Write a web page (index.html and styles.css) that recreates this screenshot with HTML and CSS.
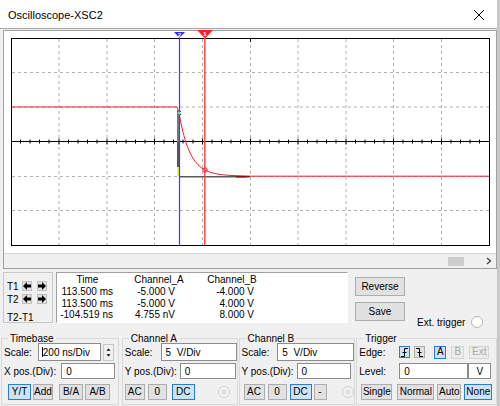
FILE: index.html
```html
<!DOCTYPE html>
<html>
<head>
<meta charset="utf-8">
<link rel="stylesheet" href="styles.css">
</head>
<body>
<div class="window">
  <div class="titlebar">
    <span class="title">Oscilloscope-XSC2</span>
    <svg class="close" width="12" height="12" viewBox="0 0 12 12"><path d="M1 1 L11 11 M11 1 L1 11" stroke="#000" stroke-width="1"/></svg>
  </div>
  <div class="scope">
    <svg class="graph" width="492" height="222" viewBox="4 31 492 222">
      <rect x="11.5" y="38.5" width="478" height="207" fill="#fff" stroke="#000" stroke-width="1"/>
      <g stroke="#b0b0b0" stroke-width="1" stroke-dasharray="3 3">
        <line x1="59" y1="39" x2="59" y2="245"/>
        <line x1="107" y1="39" x2="107" y2="245"/>
        <line x1="154.5" y1="39" x2="154.5" y2="245"/>
        <line x1="202.5" y1="39" x2="202.5" y2="245"/>
        <line x1="250.5" y1="39" x2="250.5" y2="245"/>
        <line x1="298" y1="39" x2="298" y2="245"/>
        <line x1="346" y1="39" x2="346" y2="245"/>
        <line x1="393.5" y1="39" x2="393.5" y2="245"/>
        <line x1="441.5" y1="39" x2="441.5" y2="245"/>
        <line x1="12" y1="72.5" x2="489" y2="72.5"/>
        <line x1="12" y1="107" x2="489" y2="107"/>
        <line x1="12" y1="176.5" x2="489" y2="176.5"/>
        <line x1="12" y1="210.5" x2="489" y2="210.5"/>
      </g>
      <line x1="12" y1="141.5" x2="489" y2="141.5" stroke="#000" stroke-width="1.2"/>
      <path stroke="#000" stroke-width="1" d="M20.5 139.5v4M30 139.5v4M39.5 139.5v4M49 139.5v4M68.5 139.5v4M78 139.5v4M87.5 139.5v4M97 139.5v4M59 138.5v6M116.5 139.5v4M126 139.5v4M135.5 139.5v4M145 139.5v4M107 138.5v6M164 139.5v4M173.5 139.5v4M183 139.5v4M193 139.5v4M154.5 138.5v6M212 139.5v4M221.5 139.5v4M231 139.5v4M240.5 139.5v4M202.5 138.5v6M260 139.5v4M269.5 139.5v4M279 139.5v4M288.5 139.5v4M250.5 138.5v6M307.5 139.5v4M317 139.5v4M326.5 139.5v4M336 139.5v4M298 138.5v6M355.5 139.5v4M365 139.5v4M374.5 139.5v4M384 139.5v4M346 138.5v6M403 139.5v4M412.5 139.5v4M422 139.5v4M431.5 139.5v4M393.5 138.5v6M451 139.5v4M460.5 139.5v4M470 139.5v4M479.5 139.5v4M441.5 138.5v6M250.5 39v3"/>
      <!-- channel B trace -->
      <path fill="none" stroke="#e8262b" stroke-width="1" d="M12 107 H177 L179 113 L181 123.5 L183 132.2 L185 139.5 L187 145.6 L189 150.6 L192 156.7 L195 161.3 L198 164.8 L202 168.3 L206 170.6 L210 172.2 L215 173.6 L220 174.5 L230 175.4 L240 175.8 L250 176.2 H489"/>
      <!-- channel A trace -->
      <line x1="178" y1="110" x2="178" y2="142" stroke="#7a7a7a" stroke-width="2"/>
      <line x1="178" y1="142" x2="178" y2="167" stroke="#202020" stroke-width="1.5"/>
      <line x1="178" y1="167" x2="178" y2="176" stroke="#f2f200" stroke-width="1.5"/>
      <line x1="179" y1="176.7" x2="246" y2="176.7" stroke="#5a5a5a" stroke-width="1.5"/>
      <line x1="236" y1="176.7" x2="250" y2="176.7" stroke="#8a1010" stroke-width="1.5"/>
      <!-- cursors -->
      <line x1="179.5" y1="38" x2="179.5" y2="245" stroke="#3b3bff" stroke-width="1.2"/>
      <line x1="204.8" y1="38" x2="204.8" y2="245" stroke="#ff3b3b" stroke-width="1.4"/>
      <polygon points="174,32 185,32 179.5,38" fill="#2f2fff"/>
      <text x="179.5" y="36.6" class="cur-num">2</text>
      <polygon points="197,30 213,30 205,38.5" fill="#ff1f1f"/>
      <text x="205" y="36" class="cur-num">1</text>
      <!-- markers -->
      <path d="M177 111 l4 4 M181 111 l-4 4" stroke="#2f2fff" stroke-width="1" fill="none"/>
      <circle cx="179" cy="113" r="1.5" fill="#7fd37f"/>
      <circle cx="205" cy="170" r="2.2" fill="none" stroke="#e8262b" stroke-width="1"/>
    </svg>
    <div class="hscroll">
      <div class="thumb"></div>
      <svg class="sarrow" width="6" height="8" viewBox="0 0 6 8"><path d="M1 1 L4.5 4 L1 7" fill="none" stroke="#444" stroke-width="1.3"/></svg>
    </div>
  </div>

  <div class="readout">
    <div class="tpanel">
      <div class="trow"><span class="tlabel">T1</span>
        <span class="abtn"><svg width="8" height="8" viewBox="0 0 8 8"><path d="M0 4 L4 0 V2.5 H8 V5.5 H4 V8 Z" fill="#000"/></svg></span>
        <span class="abtn"><svg width="8" height="8" viewBox="0 0 8 8"><path d="M8 4 L4 0 V2.5 H0 V5.5 H4 V8 Z" fill="#000"/></svg></span>
      </div>
      <div class="trow"><span class="tlabel">T2</span>
        <span class="abtn"><svg width="8" height="8" viewBox="0 0 8 8"><path d="M0 4 L4 0 V2.5 H8 V5.5 H4 V8 Z" fill="#000"/></svg></span>
        <span class="abtn"><svg width="8" height="8" viewBox="0 0 8 8"><path d="M8 4 L4 0 V2.5 H0 V5.5 H4 V8 Z" fill="#000"/></svg></span>
      </div>
      <div class="tdiff">T2-T1</div>
    </div>
    <div class="table">
      <div class="thead c1">Time</div><div class="thead c2">Channel_A</div><div class="thead c3">Channel_B</div>
      <div class="tcell c1">113.500 ms</div><div class="tcell c2">-5.000 V</div><div class="tcell c3">-4.000 V</div>
      <div class="tcell c1">113.500 ms</div><div class="tcell c2">-5.000 V</div><div class="tcell c3">4.000 V</div>
      <div class="tcell c1">-104.519 ns</div><div class="tcell c2">4.755 nV</div><div class="tcell c3">8.000 V</div>
    </div>
    <div class="actions">
      <button class="btn big">Reverse</button>
      <button class="btn big">Save</button>
    </div>
    <div class="ext">
      <span>Ext. trigger</span><span class="radio"></span>
    </div>
  </div>

  <div class="controls">
    <fieldset class="group g-time">
      <legend>Timebase</legend>
      <div class="row r1">
        <span class="lbl">Scale:</span>
        <span class="input w-tscale"><span class="caret"></span>200 ns/Div</span>
        <span class="spin">
          <svg width="11" height="17" viewBox="0 0 11 17"><path d="M3 6.5 L5.5 3.5 L8 6.5 Z M3 10.5 L5.5 13.5 L8 10.5 Z" fill="#000"/></svg>
        </span>
      </div>
      <div class="row r2">
        <span class="lbl">X pos.(Div):</span>
        <span class="input w-xpos">0</span>
      </div>
      <div class="row r3">
        <button class="btn on b-yt">Y/T</button>
        <button class="btn b-add">Add</button>
        <button class="btn b-ba">B/A</button>
        <button class="btn b-ab">A/B</button>
      </div>
    </fieldset>
    <fieldset class="group g-cha">
      <legend>Channel A</legend>
      <div class="row r1">
        <span class="lbl">Scale:</span>
        <span class="input w-ascale">5&nbsp; V/Div</span>
      </div>
      <div class="row r2">
        <span class="lbl">Y pos.(Div):</span>
        <span class="input w-ypos">0</span>
      </div>
      <div class="row r3">
        <button class="btn b-ac">AC</button>
        <button class="btn b-zero">0</button>
        <button class="btn on b-dc">DC</button>
        <span class="radio dim ra"></span>
      </div>
    </fieldset>
    <fieldset class="group g-chb">
      <legend>Channel B</legend>
      <div class="row r1">
        <span class="lbl">Scale:</span>
        <span class="input w-bscale">5&nbsp; V/Div</span>
      </div>
      <div class="row r2">
        <span class="lbl">Y pos.(Div):</span>
        <span class="input w-yposb">0</span>
      </div>
      <div class="row r3 r3b">
        <button class="btn b-acb">AC</button>
        <button class="btn b-zero">0</button>
        <button class="btn on b-dc">DC</button>
        <button class="btn b-minus">-</button>
        <span class="radio dim rb"></span>
      </div>
    </fieldset>
    <fieldset class="group g-trig">
      <legend>Trigger</legend>
      <div class="row r1">
        <span class="lbl lbl-t">Edge:</span>
        <button class="btn on edge e1"><svg width="9" height="9" viewBox="0 0 9 9"><path d="M1 8.5 H4.5 V0.5 H8 M2.5 4.5 H6.5" fill="none" stroke="#000" stroke-width="1"/></svg></button>
        <button class="btn edge e2"><svg width="9" height="9" viewBox="0 0 9 9"><path d="M1 0.5 H4.5 V8.5 H8 M2.5 4.5 H6.5" fill="none" stroke="#000" stroke-width="1"/></svg></button>
        <button class="btn on src sA">A</button>
        <button class="btn off src sB">B</button>
        <button class="btn off src sExt">Ext</button>
      </div>
      <div class="row r2">
        <span class="lbl lbl-t">Level:</span>
        <span class="input w-level">0</span>
        <span class="input w-unit">V</span>
      </div>
      <div class="row r3">
        <button class="btn b-single">Single</button>
        <button class="btn b-normal">Normal</button>
        <button class="btn b-auto">Auto</button>
        <button class="btn on b-none">None</button>
      </div>
    </fieldset>
  </div>
</div>
</body>
</html>
```
FILE: styles.css
```css
* { box-sizing: border-box; }
body {
  margin: 0;
  background: #f0f0f0;
  font-family: "Liberation Sans", Arial, sans-serif;
  font-size: 10px;
  color: #000;
}
.window {
  width: 500px;
  height: 406px;
  background: #f0f0f0;
  border-right: 3px solid #c8c8c8;
  overflow: hidden;
}
.titlebar {
  height: 29px;
  background: #fff;
  border-bottom: 1px solid #a8a8a8;
  display: flex;
  align-items: center;
  padding: 0 12px 0 8px;
}
.title { font-size: 11px; flex: 1; padding-top: 1px; }
.close { display: block; margin-top: 1px; }

.scope {
  margin: 1px 0 0 3px;
  width: 494px;
  height: 239px;
  border: 1px solid #a0a0a0;
  background: #fff;
}
.graph { display: block; overflow: visible; }
.cur-num { font-size: 6px; fill: #fff; text-anchor: middle; font-weight: bold; }
.hscroll {
  height: 15px;
  background: #f0f0f0;
  border-top: 1px solid #d8d8d8;
  display: flex;
  align-items: center;
  padding-right: 4px;
}
.thumb { width: 16px; height: 9px; background: #cdcdcd; margin-left: 444px; }
.sarrow { margin-left: auto; display: block; }

.readout {
  display: flex;
  margin-top: 3px;
  height: 52px;
}
.tpanel {
  margin-left: 3px;
  width: 50px;
  height: 51px;
  border: 1px solid #c8c8c8;
  padding: 7px 0 0 3px;
}
.trow { display: flex; align-items: center; height: 12px; margin-bottom: 1px; }
.tlabel { width: 18px; }
.abtn {
  width: 10px; height: 10px;
  background: #e1e1e1;
  border: 1px solid #c0c0c0;
  display: flex; align-items: center; justify-content: center;
  margin-right: 5px;
}
.abtn svg { display: block; }
.tdiff { margin-top: 7px; }

.table {
  margin-left: 3px;
  width: 292px;
  height: 51px;
  background: #fff;
  border: 1px solid #a0a0a0;
  border-right-color: #fff;
  border-bottom-color: #fff;
  display: grid;
  grid-template-columns: 57px 88px 56px;
  grid-template-rows: 12px 12.5px 11px 12px;
  align-items: center;
  padding: 0 0 0 2px;
  line-height: 11px;
}
.thead { text-align: center; }
.tcell { text-align: right; }
.tcell.c1 { padding-right: 3px; }
.tcell.c2 { padding-right: 29px; }
.tcell.c3 { padding-right: 6px; }
.thead.c2 { padding-right: 2px; }

.btn {
  font-family: inherit;
  font-size: 10px;
  color: #000;
  background: #e1e1e1;
  border: 1px solid #adadad;
  padding: 0;
  margin: 0;
  height: 16px;
  line-height: 14px;
  display: flex;
  align-items: center;
  justify-content: center;
}
.btn.on { background: #cce4f7; border-color: #2a7bd3; }
.btn.off { background: #ececec; border-color: #d6d6d6; color: #a8a8a8; }
.btn.big { width: 50px; height: 19px; font-size: 10px; }

.actions {
  margin-left: 7px;
  padding-top: 5px;
  display: flex;
  flex-direction: column;
  gap: 6px;
}
.ext {
  margin-left: 12px;
  display: flex;
  align-items: center;
  align-self: flex-end;
  padding-bottom: 0px;
  margin-bottom: -4px;
}
.ext span:first-child { margin-right: 6px; }
.radio {
  display: inline-block;
  width: 12px; height: 12px;
  border-radius: 50%;
  background: #fff;
  border: 1px solid #b8b8b8;
}
.radio.dim { border-color: #cfcfcf; background: #f6f6f6; box-shadow: inset 0 0 0 2px #f6f6f6, inset 0 0 0 5px #e2e2e2; }

.controls {
  display: flex;
  margin-top: 9px;
  height: 72px;
}
.group {
  margin: 0;
  padding: 0 0 0 1px;
  border: 1px solid #dadada;
  min-width: 0;
  height: 72px;
}
.group legend {
  padding: 0 2px;
  margin-left: 5px;
  line-height: 11px;
  font-size: 10px;
}
.g-time { margin-left: 1px; width: 118px; }
.g-cha { margin-left: 3px; width: 116px; }
.g-chb { margin-left: 1px; width: 117px; }
.g-trig { margin-left: 1px; width: 141px; }

.row { display: flex; align-items: center; }
.r1 { height: 18px; margin-top: -1px; }
.r2 { height: 16px; margin-top: 2px; }
.r3 { height: 16px; margin-top: 5px; }
.lbl { padding-left: 1px; white-space: nowrap; }
.input {
  background: #fff;
  border: 1px solid #8c8c8c;
  height: 100%;
  display: flex;
  align-items: center;
  padding-left: 4px;
  white-space: nowrap;
}
.caret { width: 1px; height: 10px; background: #000; margin-right: 0; margin-left: -1px; }
.w-tscale { width: 63px; margin-left: 6px; }
.spin {
  width: 11px; height: 17px;
  margin-left: 2px;
  background: #f0f0f0;
  border: 1px solid #c8c8c8;
  display: flex; align-items: center; justify-content: center;
}
.spin svg { display: block; }
.w-xpos { width: 54px; margin-left: 5px; }
.b-yt { width: 23px; margin-left: 5px; }
.b-add { width: 20px; margin-left: 2px; }
.b-ba { width: 24px; margin-left: 6px; }
.b-ab { width: 25px; margin-left: 2px; }

.w-ascale { width: 78px; margin-left: 8px; }
.w-ypos { width: 56px; margin-left: 3px; }
.b-ac { width: 20px; margin-left: 1px; }
.b-zero { width: 19px; margin-left: 3px; }
.b-dc { width: 23px; margin-left: 5px; }
.ra { margin-left: 23px; }

.w-bscale { width: 79px; margin-left: 8px; }
.w-yposb { width: 54px; margin-left: 3px; }
.b-acb { width: 21px; margin-left: 3px; }
.b-minus { width: 13px; margin-left: 2px; }
.rb { margin-left: 15px; }
.r3b .b-dc { margin-left: 3px; width: 22px; }

.lbl-t { width: 41px; }
.edge { width: 11px; height: 12px; }
.e2 { margin-left: 4px; }
.sA { width: 12px; margin-left: 9px; height: 13px; }
.sB { width: 13px; margin-left: 5px; height: 13px; }
.sExt { width: 20px; margin-left: 5px; height: 13px; }
.w-level { width: 69px; }
.w-unit { width: 23px; justify-content: center; padding-left: 0; }
.b-single { width: 31px; margin-left: 3px; }
.b-normal { width: 37px; margin-left: 5px; }
.b-auto { width: 24px; margin-left: 3px; }
.b-none { width: 28px; margin-left: 3px; }
```
